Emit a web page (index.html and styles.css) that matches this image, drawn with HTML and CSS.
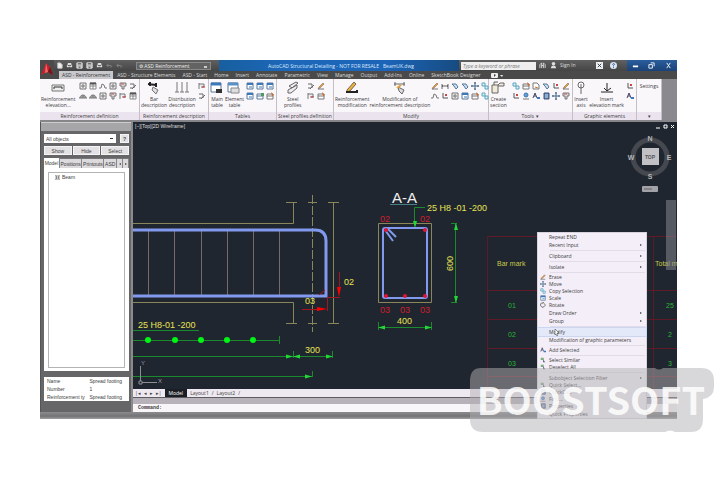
FILE: index.html
```
<!DOCTYPE html>
<html lang="en">
<head>
<meta charset="utf-8">
<title>AutoCAD Structural Detailing</title>
<link rel="stylesheet" href="styles.css">
</head>
<body>
<svg class="defs" aria-hidden="true">
  <symbol id="frame" viewBox="0 0 8 8"><path d="M1 1h6v6H1zM3 3h2v2H3z" fill="#eee" stroke="#777"/></symbol>
  <symbol id="grid" viewBox="0 0 8 8"><path d="M1 1h6v6H1zM1 4h6M4 2v5" fill="#fff" stroke="#888"/><path d="M1 1.500h6" stroke="#555" stroke-width="2"/></symbol>
  <symbol id="bend" viewBox="0 0 8 8"><path d="M0 6h2l1-4 2 1 1 3h2" fill="none" stroke="#777"/></symbol>
  <symbol id="column" viewBox="0 0 8 8"><path d="M1 1h6v3H5v3H3V4H1z" fill="#ddd" stroke="#777"/><path d="M2 2h3" stroke="#c55"/></symbol>
  <symbol id="arch" viewBox="0 0 8 8"><path d="M0 6h8M1 6c0-4 6-4 6 0M3 6V4h2v2" fill="#ccc" stroke="#777"/></symbol>
  <symbol id="table" viewBox="0 0 8 8"><path d="M1 1h6v6H1z" fill="#fff" stroke="#58789c"/><path d="M1 2h6" stroke="#3d78b8" stroke-width="2"/><path d="M3 5h3" stroke="#3d78b8"/></symbol>
  <symbol id="tableadd" viewBox="0 0 8 8"><path d="M1 2h6v5H1zM1 4h6" fill="#fff" stroke="#58789c"/><path d="M5 1h3v3H5z" fill="#4d9a60"/></symbol>
  <symbol id="tablered" viewBox="0 0 8 8"><path d="M1 2h6v5H1zM1 4h6" fill="#fff" stroke="#777"/><path d="M5 0l3 3-2 1z" fill="#c76a2c"/></symbol>
  <symbol id="pencil" viewBox="0 0 8 8"><path d="M2 5l4-4 1 1-4 4-2 1z" fill="#e0a33a" stroke="#755" stroke-width=".5"/><path d="M1 7h6" stroke="#777"/></symbol>
  <symbol id="dim" viewBox="0 0 8 8"><path d="M1 2v5M7 2v5M1 4h6M2 3L1 4l1 1M6 3l1 1-1 1" fill="none" stroke="#666"/></symbol>
  <symbol id="corner" viewBox="0 0 8 8"><path d="M2 1v5h5" fill="none" stroke="#555"/><path d="M4 2h2v2H4z" fill="#c44"/></symbol>
  <symbol id="spin" viewBox="0 0 8 8"><path d="M1 2h4l2 3-2 2-2-3z" fill="#cfe0f0" stroke="#557799"/></symbol>
  <symbol id="move" viewBox="0 0 8 8"><path d="M4 0v8M0 4h8M3 1h2M3 7h2M1 3v2M7 3v2" stroke="#468"/></symbol>
  <symbol id="profile" viewBox="0 0 8 8"><path d="M1 2h4v4M3 7l4-4M1 6h3" fill="none" stroke="#666"/></symbol>
  <symbol id="flag" viewBox="0 0 8 8"><path d="M1 1v6M1 2h5v3H3" fill="#eee" stroke="#777"/><path d="M4 5h3" stroke="#c33"/></symbol>
  <symbol id="calc" viewBox="0 0 8 8"><path d="M2 1h5v6H2z" fill="#5580b5" stroke="#457"/><path d="M3 3h3M3 5h3" stroke="#cde"/></symbol>
  <symbol id="sheet" viewBox="0 0 8 8"><path d="M1 1h4l2 2v4H1z" fill="#fff" stroke="#777"/><path d="M3 5l3 1" stroke="#c73"/></symbol>
  <symbol id="find" viewBox="0 0 8 8"><circle cx="4" cy="3" r="2" fill="#5ca0dd" stroke="#47a"/><path d="M1 7h6" stroke="#777"/></symbol>
  <symbol id="letter" viewBox="0 0 8 8"><path d="M1 6l2-5 2 5M2 4h2" fill="none" stroke="#446"/><path d="M5 5h3v2H5z" fill="#3a78c0"/></symbol>
  <symbol id="select" viewBox="0 0 8 8"><path d="M1 1h4v3H1z" fill="#7ab07c"/><path d="M4 3l3 4H4z" fill="#668"/></symbol>
  <symbol id="copy" viewBox="0 0 8 8"><path d="M1 1h3v3H1zM4 4h3v3H4z" fill="#dff2f8" stroke="#5aa5bd"/></symbol>
  <symbol id="rotate" viewBox="0 0 8 8"><path d="M3 1a3 3 0 1 0 3 1M3 0l2 1-2 1" fill="none" stroke="#555"/></symbol>
  <symbol id="save" viewBox="0 0 8 8"><path d="M1 1h6v6H1z" fill="#bbb" stroke="#eee"/><path d="M2 2h4M3 6h2" stroke="#444"/></symbol>
  <symbol id="doc" viewBox="0 0 8 8"><path d="M2 1h3l2 2v4H2z" fill="#eee" stroke="#ccc"/></symbol>
  <symbol id="print" viewBox="0 0 8 8"><path d="M2 1h4v2h1v3H1V3h1z" fill="#ddd"/><path d="M2 4h4M3 6h2" stroke="#555"/></symbol>
  <symbol id="undo" viewBox="0 0 8 8"><path d="M1 4h4c2 0 2 2 0 2M3 2L1 4l2 2" fill="none" stroke="#888"/></symbol>
</svg>

<main class="app">
  <header class="top">
    <button class="logo" aria-label="Application menu"><svg viewBox="0 0 14 18"><path d="M0 0h14v18H0z" fill="#4b4b4b"/><path d="M1 14L6 2l4 4 3 8-5-3-3 1z" fill="#c5202c"/><path d="M6 2l2 9-3 1z" fill="#ef6a67"/><path d="M10 6l3 8-5-3z" fill="#7a1018"/></svg></button>
    <div class="bars">
      <div class="titlebar">
        <div class="quick">
          <button aria-label="New"><svg><use href="#doc"/></svg></button><button aria-label="Open"><svg><use href="#print"/></svg></button><button aria-label="Save"><svg><use href="#save"/></svg></button><button aria-label="Save as"><svg><use href="#save"/></svg></button><button aria-label="Plot"><svg><use href="#print"/></svg></button><button aria-label="Undo"><svg><use href="#undo"/></svg></button><button aria-label="Redo"><svg><use href="#undo"/></svg></button>
        </div>
        <select class="workspace" aria-label="Workspace"><option>⚙ ASD Reinforcement</option></select>
        <h1>AutoCAD Structural Detailing - NOT FOR RESALE &nbsp; BeamUK.dwg</h1>
        <input class="search" type="search" aria-label="Search" placeholder="Type a keyword or phrase">
        <div class="account"><button aria-label="Find"><svg viewBox="0 0 8 8"><path d="M1 7V3l2-2v6M7 7V3L5 1v6M3 4h2" fill="none" stroke="#ddd"/></svg></button><button><svg viewBox="0 0 8 8"><circle cx="4" cy="2" r="2" fill="#ddd"/><path d="M1 7c0-4 6-4 6 0z" fill="#ddd"/></svg>Sign In</button></div>
        <div class="help"><button aria-label="Exchange"><svg viewBox="0 0 8 8"><path d="M0 0h8v8H0z" fill="#eee"/><path d="M2 2l4 4M6 2L2 6" stroke="#234" stroke-width="1"/></svg></button><button aria-label="Help"><svg viewBox="0 0 8 8"><circle cx="4" cy="4" r="4" fill="#dce6f2"/><path d="M3 3c0-2 3-1 2 0L4 4v1M4 6v1" fill="none" stroke="#248"/></svg></button></div>
        <div class="window"><button aria-label="Minimize"><svg viewBox="0 0 8 8"><path d="M1 5h6" stroke="#fff" stroke-width="2"/></svg></button><button aria-label="Restore"><svg viewBox="0 0 8 8"><path d="M3 1h4v4M1 3h4v4H1z" fill="none" stroke="#fff"/></svg></button><button aria-label="Close"><svg viewBox="0 0 8 8"><path d="M2 1l4 6M6 1L2 7" stroke="#fff" stroke-width="1"/></svg></button></div>
      </div>
      <nav class="tabs">
        <button class="on">ASD - Reinforcement</button><button>ASD - Structure Elements</button><button>ASD - Start</button><button>Home</button><button>Insert</button><button>Annotate</button><button>Parametric</button><button>View</button><button>Manage</button><button>Output</button><button>Add-Ins</button><button>Online</button><button>SketchBook Designer</button><button aria-label="Ribbon display"><svg class="mini" viewBox="0 0 12 6"><rect width="7" height="5" rx="1" fill="#eee"/><path d="M3 1l2 1-2 2z" fill="#444"/><path d="M9 2h3l-1 2z" fill="#eee"/></svg></button>
      </nav>
    </div>
  </header>

  <section class="ribbon">
    <div class="panel"><div class="tools">
      <button class="big"><svg viewBox="0 0 14 14"><path d="M1 4h12v6H1z" fill="#eee" stroke="#777"/><path d="M3 8V6h8v2" fill="none" stroke="#333"/></svg>Reinforcement<br>elevation...</button>
      <div class="small six"><button aria-label="Column"><svg><use href="#frame"/></svg></button><button aria-label="Slab"><svg><use href="#grid"/></svg></button><button aria-label="Bent bar"><svg><use href="#bend"/></svg></button><button aria-label="Opening"><svg><use href="#frame"/></svg></button><button aria-label="Footing"><svg><use href="#column"/></svg></button><button aria-label="Stair"><svg><use href="#profile"/></svg></button><button aria-label="Arch"><svg><use href="#arch"/></svg></button><button aria-label="Vault"><svg><use href="#arch"/></svg></button><button aria-label="Section"><svg><use href="#frame"/></svg></button><button aria-label="Pile cap"><svg><use href="#column"/></svg></button><button aria-label="Wall"><svg><use href="#flag"/></svg></button><button aria-label="Mesh"><svg><use href="#grid"/></svg></button></div>
    </div><h2>Reinforcement definition</h2></div>
    <div class="panel"><div class="tools">
      <button class="big"><svg viewBox="0 0 14 14"><path d="M1 3l8 1M3 1v4M9 2v4" stroke="#222" stroke-width="2"/><path d="M6 6l5 3-2 4-4-4z" fill="#ddd" stroke="#777"/></svg>Bar<br>description</button>
      <button class="big"><svg viewBox="0 0 14 14"><path d="M2 1v10M7 1v10M12 1v10M0 11h4M5 11h4M10 11h4" stroke="#777"/></svg>Distribution<br>description</button>
      <div class="small one"><button aria-label="Dimension"><svg><use href="#flag"/></svg></button><button aria-label="Distribution"><svg><use href="#profile"/></svg></button></div>
    </div><h2>Reinforcement description</h2></div>
    <div class="panel"><div class="tools">
      <button class="big"><svg viewBox="0 0 14 14"><path d="M1 2h10v9H1z" fill="#fff" stroke="#58789c"/><path d="M1 3h10" stroke="#3d78b8" stroke-width="3"/><path d="M6 8h6v4H6z" fill="#333"/></svg>Main<br>table</button>
      <button class="big"><svg viewBox="0 0 14 14"><path d="M1 2h10v9H1z" fill="#fff" stroke="#58789c"/><path d="M1 3h10" stroke="#5a8fc4" stroke-width="3"/><path d="M4 7h8v5H4z" fill="#ddd" stroke="#888"/></svg>Element<br>table</button>
      <div class="small three"><button aria-label="Table 1"><svg><use href="#table"/></svg></button><button aria-label="Table 2"><svg><use href="#table"/></svg></button><button aria-label="Table 3"><svg><use href="#table"/></svg></button><button aria-label="Table 4"><svg><use href="#table"/></svg></button><button aria-label="Add table"><svg><use href="#tableadd"/></svg></button><button aria-label="Edit table"><svg><use href="#tablered"/></svg></button></div>
    </div><h2>Tables</h2></div>
    <div class="panel"><div class="tools">
      <button class="big indent"><svg viewBox="0 0 14 14"><path d="M3 5l7-4 2 1-6 5zM2 9l9-5v3l-6 5H2z" fill="#eee" stroke="#666"/></svg>Steel<br>profiles</button>
      <div class="small two"><button aria-label="Profile"><svg><use href="#profile"/></svg></button><button aria-label="Profile edit"><svg><use href="#pencil"/></svg></button><button aria-label="Profile label"><svg><use href="#flag"/></svg></button><button aria-label="Profile table"><svg><use href="#tablered"/></svg></button></div>
    </div><h2>Steel profiles definition</h2></div>
    <div class="panel"><div class="tools">
      <button class="big"><svg viewBox="0 0 14 14"><path d="M2 9l7-8 2 2-6 7-3 1z" fill="#e9b23d" stroke="#765"/><path d="M1 11h11v-2" fill="none" stroke="#222" stroke-width="2"/></svg>Reinforcement<br>modification</button>
      <button class="big"><svg viewBox="0 0 14 14"><path d="M1 3h11M2 1v4M11 1v4" stroke="#666"/><path d="M5 6l6 3-2 4-3-3z" fill="#ddd" stroke="#666"/><path d="M4 7l4-3" stroke="#e9a23d" stroke-width="2"/></svg>Modification of<br>reinforcement description</button>
      <div class="small six"><button aria-label="Edit"><svg><use href="#pencil"/></svg></button><button aria-label="Stretch"><svg><use href="#dim"/></svg></button><button aria-label="Turn"><svg><use href="#spin"/></svg></button><button aria-label="Rotate part"><svg><use href="#spin"/></svg></button><button aria-label="Fit"><svg><use href="#move"/></svg></button><button aria-label="Scale part"><svg><use href="#copy"/></svg></button><button aria-label="Corner"><svg><use href="#bend"/></svg></button><button aria-label="Angle"><svg><use href="#corner"/></svg></button><button aria-label="Box"><svg><use href="#frame"/></svg></button><button aria-label="Table"><svg><use href="#table"/></svg></button><button aria-label="Edit box"><svg><use href="#tablered"/></svg></button><button aria-label="Windows"><svg><use href="#copy"/></svg></button></div>
    </div><h2>Modify</h2></div>
    <div class="panel"><div class="tools">
      <button class="big"><svg viewBox="0 0 14 14"><path d="M1 4h6v8H1zM7 4l2-2h4v3H7M3 4V1h4" fill="#f2ead8" stroke="#666"/></svg>Create<br>section</button>
      <div class="small six"><button aria-label="Export"><svg><use href="#copy"/></svg></button><button aria-label="New table"><svg><use href="#tablered"/></svg></button><button aria-label="Sheet"><svg><use href="#sheet"/></svg></button><button aria-label="Link"><svg><use href="#spin"/></svg></button><button aria-label="Corner tool"><svg><use href="#corner"/></svg></button><button aria-label="Pen"><svg><use href="#pencil"/></svg></button><button aria-label="Cut"><svg><use href="#corner"/></svg></button><button aria-label="Locate"><svg><use href="#find"/></svg></button><button aria-label="Text"><svg><use href="#letter"/></svg></button><button aria-label="Calculator"><svg><use href="#calc"/></svg></button><button aria-label="Target"><svg><use href="#move"/></svg></button><button aria-label="Column tool"><svg><use href="#column"/></svg></button></div>
    </div><h2>Tools &nbsp;▾</h2></div>
    <div class="panel"><div class="tools">
      <button class="big"><svg viewBox="0 0 14 14"><circle cx="7" cy="4" r="3" fill="#fff" stroke="#666"/><path d="M7 3v10" stroke="#666"/></svg>Insert<br>axis</button>
      <button class="big"><svg viewBox="0 0 14 14"><path d="M1 11h12M7 2v8M4 7l3 3 4-3" fill="none" stroke="#222"/></svg>Insert<br>elevation mark</button>
      <div class="small one"><button aria-label="Weld"><svg><use href="#corner"/></svg></button><button aria-label="Text style"><svg><use href="#letter"/></svg></button></div>
    </div><h2>Graphic elements</h2></div>
    <div class="panel"><div class="tools"><button class="plain">Settings</button></div><h2>▾</h2></div>
    <div class="rest"></div>
  </section>

  <div class="work">
    <aside class="palette">
      <div class="grip"></div>
      <div class="row"><select aria-label="Object filter"><option>All objects</option></select><button aria-label="Help">?</button></div>
      <div class="row three-up"><button>Show</button><button>Hide</button><button>Select</button></div>
      <div class="ptabs"><button class="on">Model</button><button>Positions</button><button>Printouts</button><button>ASD</button><button class="arrow" aria-label="Previous"></button><button class="arrow" aria-label="Next"></button></div>
      <div class="tree"><ul><li><svg viewBox="0 0 6 6"><path d="M0 0h6v6H0z" fill="#fff" stroke="#888"/><path d="M2 1v4M4 1v4" stroke="#555"/></svg>Beam</li></ul></div>
      <table class="props"><tr><th>Name</th><td>Spread footing</td></tr><tr><th>Number</th><td>1</td></tr><tr><th>Reinforcement ty</th><td>Spread footing</td></tr></table>
    </aside>

    <section class="view">
      <svg class="drawing" viewBox="133 122 544 267" preserveAspectRatio="xMinYMin slice">
        <g fill="none" stroke="#89875a">
          <path d="M133 223.500H293.500V202.500M133 302.500H293.500V323.500M286 202.500h11M286 323.500h11M333.500 202v122M328 202.500h11M328 323.500h11M308 202.500h9M308 323.500h9"/>
          <path d="M312.500 195v137" stroke-dasharray="9 2"/>
          <path d="M378.500 223.500h53v79h-53z"/>
        </g>
        <path d="M148.500 229v67M174.500 229v67M201.500 229v67M227.500 229v67M253.500 229v67M279.500 229v67" stroke="#786a68"/>
        <path d="M133 230H315Q326 230 326 241V296H133" fill="none" stroke="#819aef" stroke-width="3"/>
        <g fill="none" stroke="#1b8a2c">
          <path d="M133 330.500h66M133 340.500h147M279.500 336v8M133 356.500h200M293.500 351v7M332.500 351v7M133 376.500h179M312.500 371v6M414.500 225V207.500H425M455.500 223v80M451 223.500h6M451 302.500h6M378 327.500h53M378.500 322v8M431.500 322v8"/>
        </g>
        <path d="M286 354.500l7 2-7 2zM300 354.500l-7 2 7 2zM326 354.500l7 2-7 2zM305 374.500l7 2-7 2zM413 221l2 7 2-7zM454 230l2-7 2 7zM454 296l2 7 2-7zM385 325.500l-7 2 7 2zM425 325.500l7 2-7 2z" fill="#22d837"/>
        <g fill="#00f414"><circle cx="148" cy="340" r="3"/><circle cx="175" cy="340" r="3"/><circle cx="201" cy="340" r="3"/><circle cx="227" cy="340" r="3"/><circle cx="253" cy="340" r="3"/></g>
        <g stroke="#a01820" fill="none"><path d="M302 309.500h17M327.500 297v14M327 297.500h13M339.500 272v16M319 295l6-5"/></g>
        <path d="M317 307l10 2-10 2zM337 287l2 10 2-10z" fill="#f00"/>
        <g fill="none" stroke="#819aef" stroke-width="2"><rect x="383" y="228" width="44" height="70" rx="2"/><path d="M385 230l8 11M388 229l8 8"/></g>
        <g fill="#e01535"><circle cx="386" cy="230" r="2"/><circle cx="425" cy="230" r="2"/><circle cx="386" cy="296" r="2"/><circle cx="405" cy="296" r="2"/><circle cx="425" cy="296" r="2"/></g>
        <path d="M390 204.500h27" stroke="#467f86"/>
        <g class="yellow"><text x="138" y="328">25 H8-01 -200</text><text x="305" y="353">300</text><text x="305" y="304">03</text><text x="344" y="285">02</text><text x="427" y="211">25 H8 -01 -200</text><text x="397" y="324">400</text><text transform="translate(453 271) rotate(-90)">600</text></g>
        <g class="red"><text x="380" y="222">02</text><text x="420" y="222">02</text><text x="380" y="313">03</text><text x="400" y="313">03</text><text x="420" y="313">03</text></g>
        <text class="heading" x="392" y="203">A-A</text>
        <path d="M677 236.500H487.500V389M487 290.500h190M487 319.500h190M487 348.500h190M487 376.500h190M653.500 236v153" fill="none" stroke="#5e1a26"/>
        <g class="cell"><text x="497" y="266">Bar mark</text><text x="655" y="266">Total m</text></g>
        <g class="count"><text x="512" y="308">01</text><text x="512" y="337">02</text><text x="512" y="366">03</text><text x="670" y="308">25</text><text x="670" y="337">2</text><text x="670" y="366">3</text></g>
        <g fill="none" stroke="#8b8f94"><path d="M140.500 366v15M142 382.500h15M139 381h3v3h-3z"/></g>
        <g class="axis"><text x="141" y="365">Y</text><text x="158" y="383">X</text></g>
      </svg>
      <span class="viewname">[–][Top][2D Wireframe]</span>
      <svg class="cube" viewBox="0 0 50 72" role="img" aria-label="View cube">
        <path d="M29 6h4" stroke="#fff" stroke-width="1"/><path d="M37 3h3v3h-3zM44 3l3 3M47 3l-3 3" fill="none" stroke="#fff"/>
        <circle cx="23" cy="35" r="17" fill="none" stroke="#45494f" stroke-width="5"/>
        <rect x="15" y="26" width="17" height="17" fill="#c2c2c6"/><text class="face" x="23" y="37">TOP</text>
        <text x="23" y="19">N</text><text x="23" y="57">S</text><text x="4" y="38">W</text><text x="42" y="38">E</text>
        <rect x="15" y="64" width="16" height="6" rx="1" fill="#a2a2a8"/><path d="M17 67h8" stroke="#62646a"/>
      </svg>
      <div class="navbar"></div>
    </section>

    <footer class="bottom">
      <div class="layouts"><button>|◂</button><button>◂</button><button>▸</button><button>▸|</button><button class="on">Model</button><button>Layout1</button><span>/</span><button>Layout2</button><span>/</span></div>
      <div class="history"></div>
      <label class="command">Command: <input type="text"></label>
    </footer>
  </div>
  <div class="status"></div>

  <ul class="menu">
    <li><button>Repeat END</button></li>
    <li class="sub"><button>Recent Input</button></li>
    <li class="sep sub"><button>Clipboard</button></li>
    <li class="sep sub"><button>Isolate</button></li>
    <li class="sep tight"><button><svg><use href="#pencil"/></svg>Erase</button></li>
    <li class="tight"><button><svg><use href="#move"/></svg>Move</button></li>
    <li class="tight"><button><svg><use href="#copy"/></svg>Copy Selection</button></li>
    <li class="tight"><button><svg><use href="#table"/></svg>Scale</button></li>
    <li class="tight"><button><svg><use href="#rotate"/></svg>Rotate</button></li>
    <li class="sub"><button>Draw Order</button></li>
    <li class="sub"><button>Group</button></li>
    <li class="sep hover"><button>Modify</button><svg class="cursor" viewBox="0 0 6 8"><path d="M1 0v6l1-1 1 2 1-1-1-2h2z" fill="#fff" stroke="#333" stroke-width=".5"/></svg></li>
    <li><button>Modification of graphic parameters</button></li>
    <li class="sep tight"><button><svg><use href="#letter"/></svg>Add Selected</button></li>
    <li class="sep tight"><button><svg><use href="#select"/></svg>Select Similar</button></li>
    <li class="tight"><button><svg><use href="#select"/></svg>Deselect All</button></li>
    <li class="sep sub"><button>Subobject Selection Filter</button></li>
    <li class="tight"><button><svg><use href="#select"/></svg>Quick Select...</button></li>
    <li class="tight"><button><svg><use href="#calc"/></svg>QuickCalc</button></li>
    <li class="tight"><button><svg><use href="#find"/></svg>Find...</button></li>
    <li class="tight"><button><svg><use href="#calc"/></svg>Properties</button></li>
    <li><button>Quick Properties</button></li>
  </ul>
</main>
<svg class="watermark" viewBox="0 0 252 72">
  <path class="halo" d="M16 3H190Q194 6 198 3H236Q249 3 249 16V22Q249 32 238 34V54Q238 67 226 67H210Q205 64 200 67H18Q5 67 5 54V16Q5 3 16 3z"/>
  <text x="126" y="50">BOOSTSOFT</text>
</svg>
</body>
</html>
```
FILE: styles.css
```
* { box-sizing: border-box; }
body {
  margin: 0;
  min-height: 100vh;
  display: flex;
  position: relative;
  padding: 60px 43px 61px 40px;
  background: #fff;
  font: 5px/6px "Open Sans", "Liberation Sans", sans-serif;
  color: #3c3c3c;
}
button, input, select {
  font: inherit;
  color: inherit;
  border: 0;
  padding: 0;
  margin: 0;
  background: none;
  border-radius: 0;
  appearance: none;
}
ul { list-style: none; margin: 0; padding: 0; }
h1, h2 { margin: 0; font: inherit; }
.defs { position: absolute; width: 0; height: 0; }

.app {
  flex: 1;
  min-width: 0;
  display: flex;
  flex-direction: column;
  position: relative;
  background: #6c6c6e;
}

/* Title bar and ribbon tabs */
.top { display: flex; height: 19px; background: #4a4a4a; }
.logo { width: 14px; }
.logo svg { display: block; width: 14px; height: 18px; }
.bars { flex: 1; min-width: 0; }
.titlebar {
  display: flex;
  align-items: center;
  height: 11px;
  background: linear-gradient(#606060, #454545);
  color: #ddd;
}
.quick { display: flex; gap: 2px; width: 82px; padding-left: 2px; }
.titlebar svg { display: block; width: 7px; height: 7px; }
.quick button { width: 8px; }
.workspace {
  width: 75px;
  height: 8px;
  padding-left: 2px;
  border: 1px solid #888;
  background: linear-gradient(90deg, transparent 67px, #ccc 67px, #ccc 70px, transparent 70px) 0 3px / 100% 2px no-repeat, #636363;
  color: #eee;
}
h1 {
  flex: 1;
  height: 11px;
  margin: 0 2px 0 8px;
  padding-left: 4px;
  line-height: 12px;
  text-align: center;
  white-space: nowrap;
  overflow: hidden;
  color: #dce9fa;
  background: linear-gradient(90deg, #175f9f, #1d68bb 30%, #1b64b8 70%, #174b80);
}
.search { width: 75px; height: 8px; padding: 0 2px; background: #eee; color: #333; }
.search::placeholder { color: #777; font-style: italic; }
.account { display: flex; gap: 4px; width: 60px; padding-left: 3px; }
.account button { display: flex; gap: 3px; }
.help { display: flex; gap: 7px; width: 31px; }
.window {
  display: flex;
  align-items: center;
  justify-content: space-around;
  width: 50px;
  height: 11px;
  background: linear-gradient(#2a5e9d, #1a4278);
}
.tabs { display: flex; align-items: flex-end; gap: 1px; height: 8px; padding-left: 5px; color: #ddd; }
.tabs button { height: 8px; padding: 0 3px; white-space: nowrap; line-height: 8px; }
.tabs .on { background: #c9c9cd; color: #333; }
.mini { width: 12px; height: 6px; margin: 1px 0 0 3px; display: block; }

/* Ribbon */
.ribbon {
  display: grid;
  grid-template-columns: 100fr 69fr 68fr 57fr 155fr 84fr 64fr 25fr 15fr;
  height: 43px;
  border-bottom: 2px solid #85858a;
  background: #faf7fb;
}
.panel { display: flex; flex-direction: column; min-width: 0; border-right: 1px solid #c4bec8; }
.tools { flex: 1; display: flex; justify-content: space-between; padding: 2px 1px 0; }
.panel h2 { height: 8px; line-height: 8px; text-align: center; white-space: nowrap; background: #ebe4ee; }
.big { flex: none; display: block; align-self: flex-start; text-align: center; white-space: nowrap; }
.big svg { display: block; width: 14px; height: 14px; margin: 0 auto 1px; }
.indent { margin-left: 6px; }
.plain { display: block; flex: 1; align-self: flex-start; padding-top: 2px; text-align: center; }
.small { display: grid; grid-auto-rows: 10px; align-content: start; }
.small button { display: grid; place-items: center; }
.small svg { width: 8px; height: 8px; }
.six { grid-template-columns: repeat(6, 10px); }
.three { grid-template-columns: repeat(3, 10px); }
.two { grid-template-columns: repeat(2, 10px); margin-right: 6px; }
.one { grid-template-columns: 10px; }
.rest { background: #8a898d; }

/* Palette and drawing area */
.work {
  flex: 1;
  display: grid;
  grid-template-columns: 93px 1fr;
  grid-template-rows: 1fr auto;
}
.palette {
  grid-row: 1 / 3;
  display: flex;
  flex-direction: column;
  gap: 3px;
  padding: 0 2px 11px 3px;
  border-left: 1px solid #555;
  border-right: 2px solid #8b8b8b;
  background: #666668;
  font-family: "Liberation Sans", sans-serif;
}
.grip { height: 9px; margin: 0 -2px 0 -3px; background: #a6a6a8; border-top: 1px solid #ccc; }
.row { display: flex; gap: 4px; }
.row select {
  flex: 1;
  height: 9px;
  padding-left: 2px;
  background: linear-gradient(#333, #333) calc(100% - 3px) 4px / 3px 1px no-repeat, #fff;
}
.row button { height: 9px; line-height: 8px; background: #e4e1e4; border: 1px solid #f5f5f5; }
.row > button:last-child { width: 9px; font-weight: bold; }
.row.three-up { gap: 1px; }
.row.three-up button { flex: 1; width: auto; font-weight: normal; }
.ptabs { display: flex; align-items: flex-end; height: 10px; margin-bottom: -3px; background: #77777a; }
.ptabs button { flex: auto; height: 9px; padding: 0; line-height: 8px; background: #dcdadc; border-right: 1px solid #888; white-space: nowrap; }
.ptabs .on { height: 10px; background: #fff; }
.ptabs .arrow { flex: 0 0 6px; display: grid; place-items: center; }
.arrow::before { content: ""; border: 1px solid transparent; border-right: 2px solid #444; }
.arrow:last-child::before { border-right: 0; border-left: 2px solid #444; }
.tree { flex: 1; padding: 4px 4px 3px; background: #fff; }
.tree ul { height: 100%; padding: 0 6px; border: 1px solid #b4b4b4; }
.tree li { display: flex; align-items: center; gap: 2px; padding-top: 1px; }
.tree svg { width: 5px; height: 5px; }
.props { height: 24px; margin-top: 3px; border-collapse: collapse; background: #fff; table-layout: fixed; width: 100%; }
.props th, .props td { padding: 0 0 0 3px; height: 8px; text-align: left; font-weight: normal; white-space: nowrap; }

.view { position: relative; background: #20262f; overflow: hidden; }
.drawing { position: absolute; inset: 0; width: 100%; height: 100%; }
svg text { font-family: "Liberation Sans", sans-serif; }
.yellow { fill: #e6e356; font-size: 9px; }
.red { fill: #d01c2c; font-size: 9px; }
.heading { fill: #eee; font-size: 15px; }
.cell { fill: #c8c84e; font-size: 7px; }
.count { fill: #27b834; font-size: 7px; text-anchor: middle; }
.axis { fill: #9a9ea4; font-size: 6px; }
.viewname { position: absolute; left: 2px; top: 1px; color: #ddd; font-family: "Liberation Sans", sans-serif; }
.cube { position: absolute; right: 0; top: 0; width: 50px; height: 72px; }
.cube text { fill: #b4b6b8; font-size: 7px; font-weight: bold; text-anchor: middle; }
.cube .face { fill: #555; font-size: 5px; }
.navbar { position: absolute; right: 1px; top: 78px; width: 10px; height: 70px; background: #8c9097; opacity: .5; }

.bottom { background: #fff; }
.layouts { display: flex; align-items: center; height: 8px; gap: 3px; padding-left: 2px; background: #eee9f0; }
.layouts .on { padding: 0 4px; background: #1b1e24; color: #fff; height: 8px; }
.history { height: 7px; border-top: 1px solid #5b5b60; background: #b7b1b9; }
.command { display: flex; height: 8px; padding-left: 5px; background: #f8f6f8; font: bold 5px/8px "Liberation Mono", monospace; }
.command input { flex: 1; }
.status { height: 7px; background: linear-gradient(#8c8c8e, #737375 60%, #a0a0a2); }

/* Context menu */
.menu {
  position: absolute;
  right: 30px;
  top: 172px;
  width: 110px;
  background: #f3eef7;
  border: 1px solid #d8d3dc;
}
.menu li { position: relative; height: 8px; }
.menu .tight { height: 7px; }
.menu .sep { margin-top: 3px; }
.menu .sep::before { content: ""; position: absolute; left: 12px; right: 1px; top: -2px; height: 1px; background: #e2dce6; }
.menu button { display: block; width: 100%; height: 100%; padding-left: 11px; text-align: left; line-height: 7px; white-space: nowrap; }
.menu button svg { position: absolute; left: 2px; top: 0; width: 6px; height: 6px; }
.menu .sub::after { content: ""; position: absolute; right: 3px; top: 3px; border: 1px solid transparent; border-left: 2px solid #444; }
.menu .hover { background: #e3e9f8; outline: 1px solid #cbd7f0; }
.cursor { position: absolute; left: 16px; top: 1px; width: 6px; height: 8px; }

/* Watermark */
.watermark { position: absolute; right: 3px; bottom: 43px; width: 252px; height: 72px; pointer-events: none; }
.watermark text {
  font-family: "Noto Sans CJK JP", "Liberation Sans", sans-serif;
  font-weight: bold;
  font-size: 38px;
  text-anchor: middle;
  fill: #fff;
  fill-opacity: .85;
}
.halo { fill: #b2b0b4; opacity: .5; }
```
